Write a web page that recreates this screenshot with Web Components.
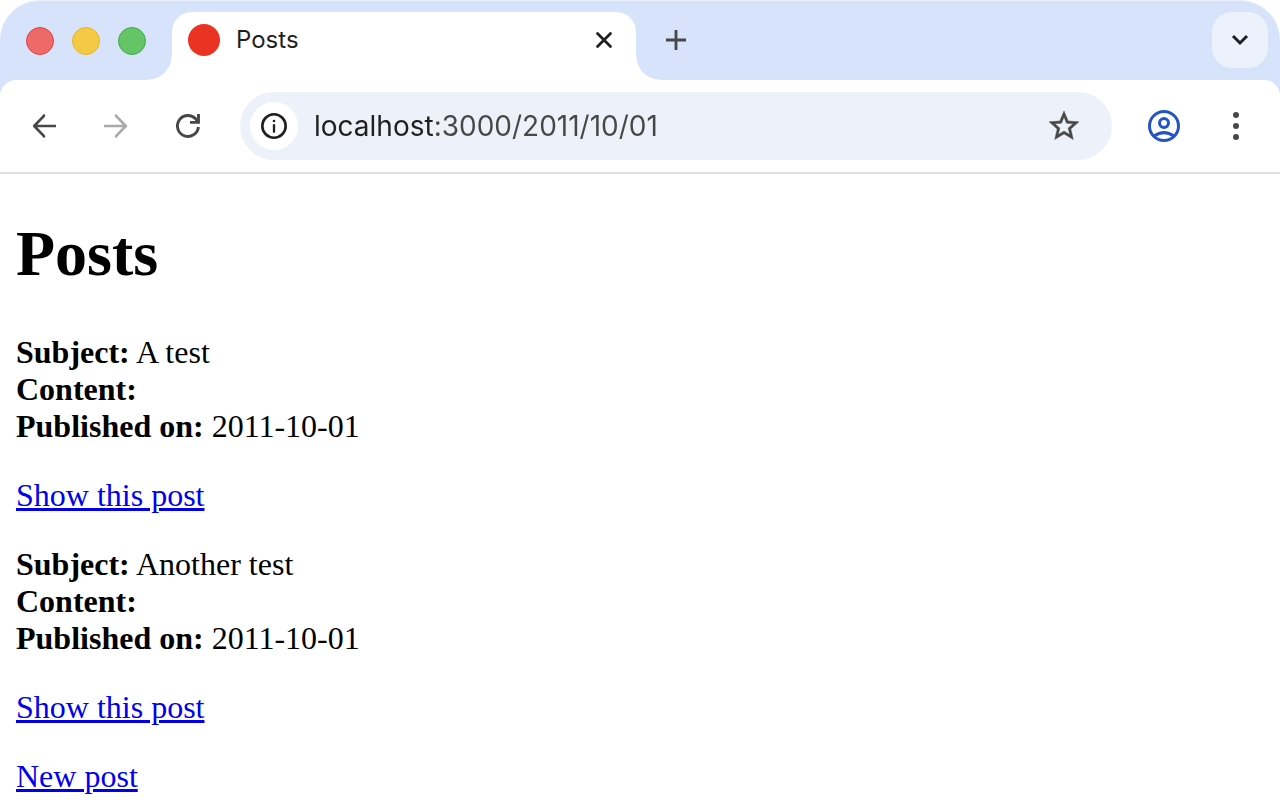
<!DOCTYPE html>
<html lang="en">
<head>
<meta charset="utf-8">
<meta name="viewport" content="width=device-width, initial-scale=1">
<title>Posts</title>
<style>
    body {
        margin: 0;
        background: #FFF;
        color: #000;
        font-family: "Liberation Serif", "Times New Roman", serif;
        font-size: 32px;
        line-height: 37px;
    }

    h1 {
        margin: 0 0 43px;
        font-size: 64px;
        line-height: 74px;
    }

    p {
        margin: 32px 0;
    }

    a {
        color: #0000EE;
    }
</style>
</head>
<body>
<browser-window>
    <tab-strip slot="tabs">
        <browser-tab>Posts</browser-tab>
    </tab-strip>
    <nav-bar slot="toolbar" host="localhost" path=":3000/2011/10/01"></nav-bar>

    <h1>Posts</h1>
    <post-item subject="A test" published="2011-10-01"></post-item>
    <p><a href="#post-1">Show this post</a></p>
    <post-item subject="Another test" published="2011-10-01"></post-item>
    <p><a href="#post-2">Show this post</a></p>
    <p><a href="#new">New post</a></p>
</browser-window>

<script>
// all icons are drawn around 0,0
const ICONS = {
    back: '<path d="M12 0H-9.8M.2-10.4L-9.8 0 .2 10.4" stroke-width="2.7" stroke-linejoin="round"/><path d="M0-10.6h.1M0 10.6h.1" stroke-width="2.4" stroke-linecap="round"/>',
    forward: '<path d="M-12 0H9.8M-.2-10.4L9.8 0-.2 10.4" stroke-width="2.7" stroke-linejoin="round"/><path d="M0-10.6h-.1M0 10.6h-.1" stroke-width="2.4" stroke-linecap="round"/>',
    reload: '<path d="M10.4 1A10.5 10.5 0 1 1 7.6-7.2L10.4-3.8M2-3.6H10.5V-12" stroke-width="2.9"/>',
    info: '<circle r="11.7" stroke-width="2.6"/><path d="M0-1.8V6.7" stroke-width="2.3"/><circle cy="-5" r="1.3" fill="currentColor" stroke="none"/>',
    star: '<path transform="scale(1.5) translate(-12 -12)" fill="currentColor" stroke-width=".3" d="M22 9.24l-7.19-.62L12 2 9.19 8.63 2 9.24l5.46 4.73L5.82 21 12 17.27 18.18 21l-1.63-7.03L22 9.24zM12 15.4l-3.76 2.27 1-4.28-3.32-2.88 4.38-.38L12 6.1l1.71 4.04 4.38.38-3.32 2.88 1 4.28L12 15.4z"/>',
    profile: '<circle r="14.5" stroke-width="3"/><circle cy="-3" r="4.5" stroke-width="3"/><path d="M-10 10.2Q0 3 10 10.2" stroke-width="3"/>',
    menu: '<g fill="currentColor" stroke="none"><circle cy="-11" r="3"/><circle r="3"/><circle cy="11" r="3"/></g>',
    close: '<path d="M-6.5-6.5L6.5 6.5M6.5-6.5L-6.5 6.5" stroke-width="2.8" stroke-linecap="round"/>',
    plus: '<path d="M-10 0H10M0-10V10" stroke-width="2.8"/>',
    chevron: '<path d="M-7-4L0 3 7-4" stroke-width="3"/>'
};

class IconButton extends HTMLElement {
    constructor() {
        super();

        const shadowRoot = this.attachShadow({ mode: 'open' });
        shadowRoot.innerHTML = `
            <style>
                :host {
                    display: flex;
                    flex: none;
                    width: 56px;
                    height: 56px;
                    color: #474747;
                }

                button {
                    display: flex;
                    flex: 1;
                    align-items: center;
                    justify-content: center;
                    min-width: 0;
                    padding: 0;
                    border: 0;
                    border-radius: 20px;
                    background: none;
                    color: inherit;
                    cursor: pointer;
                }

                :host([filled]) button {
                    background: #EBF2FC;
                }

                :host([round]) button {
                    border-radius: 50%;
                    background: #FFF;
                }

                svg {
                    flex: none;
                    width: 40px;
                    height: 40px;
                    fill: none;
                    stroke: currentColor;
                }
            </style>

            <button type="button" aria-label="${this.getAttribute('label')}">
                <svg viewBox="-20 -20 40 40" aria-hidden="true">${ICONS[this.getAttribute('icon')]}</svg>
            </button>
        `;
    }
}

class BrowserWindow extends HTMLElement {
    constructor() {
        super();

        const shadowRoot = this.attachShadow({ mode: 'open' });
        shadowRoot.innerHTML = `
            <style>
                :host {
                    display: block;
                }

                header {
                    border-top: 1px solid #E9EFFA;
                    border-radius: 40px 40px 0 0;
                    background: #D7E2FB;
                }

                main {
                    padding: 43px 16px 0;
                }
            </style>

            <header>
                <slot name="tabs"></slot>
                <slot name="toolbar"></slot>
            </header>
            <main><slot></slot></main>
        `;
    }
}

class TabStrip extends HTMLElement {
    constructor() {
        super();

        const shadowRoot = this.attachShadow({ mode: 'open' });
        shadowRoot.innerHTML = `
            <style>
                :host {
                    display: flex;
                    align-items: flex-start;
                    padding: 11px 12px 0 26px;
                }

                .lights {
                    display: flex;
                    flex: none;
                    align-items: center;
                    gap: 18px;
                    height: 58px;
                    margin-right: 2px;
                }

                .lights span {
                    box-sizing: border-box;
                    width: 28px;
                    height: 28px;
                    border: 1px solid #E0443F;
                    border-radius: 50%;
                    background: #EE6A68;
                }

                .lights .minimize {
                    border-color: #E9B61E;
                    background: #F4C945;
                }

                .lights .zoom {
                    border-color: #3DAE43;
                    background: #65C466;
                }

                icon-button[icon="plus"] {
                    width: 32px;
                }

                icon-button[icon="chevron"] {
                    margin-left: auto;
                    color: #1F1F1F;
                }
            </style>

            <div class="lights"><span></span><span class="minimize"></span><span class="zoom"></span></div>
            <slot></slot>
            <icon-button icon="plus" label="New tab"></icon-button>
            <icon-button icon="chevron" label="Search tabs" filled></icon-button>
        `;
    }
}

class BrowserTab extends HTMLElement {
    constructor() {
        super();

        const shadowRoot = this.attachShadow({ mode: 'open' });
        shadowRoot.innerHTML = `
            <style>
                :host {
                    display: flex;
                    flex: 0 1 512px;
                    align-items: flex-end;
                    color: #1F1F1F;
                    font: 24px/32px Inter, "Liberation Sans", sans-serif;
                }

                /* the outward curves at the foot of the tab */
                .flare {
                    flex: none;
                    width: 24px;
                    height: 24px;
                    background: radial-gradient(circle at 0 0, transparent 23px, #FFF 24px);
                }

                .flare.right {
                    background: radial-gradient(circle at 100% 0, transparent 23px, #FFF 24px);
                }

                .tab {
                    display: flex;
                    flex: 1;
                    align-items: center;
                    gap: 16px;
                    min-width: 0;
                    height: 56px;
                    padding: 0 12px 12px 16px;
                    border-radius: 20px 20px 0 0;
                    background: #FFF;
                }

                .favicon {
                    width: 32px;
                    height: 32px;
                    border-radius: 50%;
                    background: #EB3323;
                }

                .title {
                    flex: 1;
                }

                icon-button {
                    width: 40px;
                    height: 40px;
                    color: #1F1F1F;
                }
            </style>

            <span class="flare"></span>
            <div class="tab">
                <span class="favicon"></span>
                <span class="title"><slot></slot></span>
                <icon-button icon="close" label="Close tab"></icon-button>
            </div>
            <span class="flare right"></span>
        `;
    }
}

class NavBar extends HTMLElement {
    constructor() {
        super();

        const host = this.getAttribute('host');
        const path = this.getAttribute('path');
        const shadowRoot = this.attachShadow({ mode: 'open' });
        shadowRoot.innerHTML = `
            <style>
                :host {
                    display: flex;
                    align-items: center;
                    gap: 16px;
                    padding: 12px 16px;
                    border-bottom: 2px solid #DFE0E1;
                    border-radius: 16px 16px 0 0;
                    background: #FFF;
                }

                icon-button[icon="forward"] {
                    color: #A9A9A9;
                }

                icon-button[icon="profile"] {
                    color: #2553C7;
                }

                .omnibox {
                    display: flex;
                    flex: 1;
                    align-items: center;
                    gap: 16px;
                    min-width: 0;
                    height: 68px;
                    margin: 0 8px;
                    padding: 0 24px 0 10px;
                    box-sizing: border-box;
                    border-radius: 34px;
                    background: #EDF2FA;
                }

                .omnibox icon-button {
                    width: 48px;
                    height: 48px;
                }

                .omnibox icon-button[icon="info"] {
                    color: #1F1F1F;
                }

                /* host name darker than the rest of the address */
                input {
                    flex: 1;
                    min-width: 0;
                    padding: 0;
                    border: 0;
                    outline: 0;
                    background: linear-gradient(to right, #1F1F1F 120px, #474747 120px);
                    background-clip: text;
                    color: transparent;
                    caret-color: #1F1F1F;
                    font: 28px/40px Inter, "Liberation Sans", sans-serif;
                }
            </style>

            <icon-button icon="back" label="Back"></icon-button>
            <icon-button icon="forward" label="Forward"></icon-button>
            <icon-button icon="reload" label="Reload"></icon-button>
            <div class="omnibox">
                <icon-button icon="info" label="Site information" round></icon-button>
                <input type="text" aria-label="Address" value="${host}${path}" spellcheck="false">
                <icon-button icon="star" label="Bookmark this page"></icon-button>
            </div>
            <icon-button icon="profile" label="Profile"></icon-button>
            <icon-button icon="menu" label="Menu"></icon-button>
        `;
    }
}

class PostItem extends HTMLElement {
    constructor() {
        super();

        const shadowRoot = this.attachShadow({ mode: 'open' });
        shadowRoot.innerHTML = `
            <style>
                :host {
                    display: block;
                }
            </style>

            <div><strong>Subject:</strong> ${this.getAttribute('subject')}</div>
            <div><strong>Content:</strong> <slot></slot></div>
            <div><strong>Published on:</strong> ${this.getAttribute('published')}</div>
        `;
    }
}

customElements.define("icon-button", IconButton );
customElements.define("browser-window", BrowserWindow );
customElements.define("tab-strip", TabStrip );
customElements.define("browser-tab", BrowserTab );
customElements.define("nav-bar", NavBar );
customElements.define("post-item", PostItem );
</script>
</body>
</html>
